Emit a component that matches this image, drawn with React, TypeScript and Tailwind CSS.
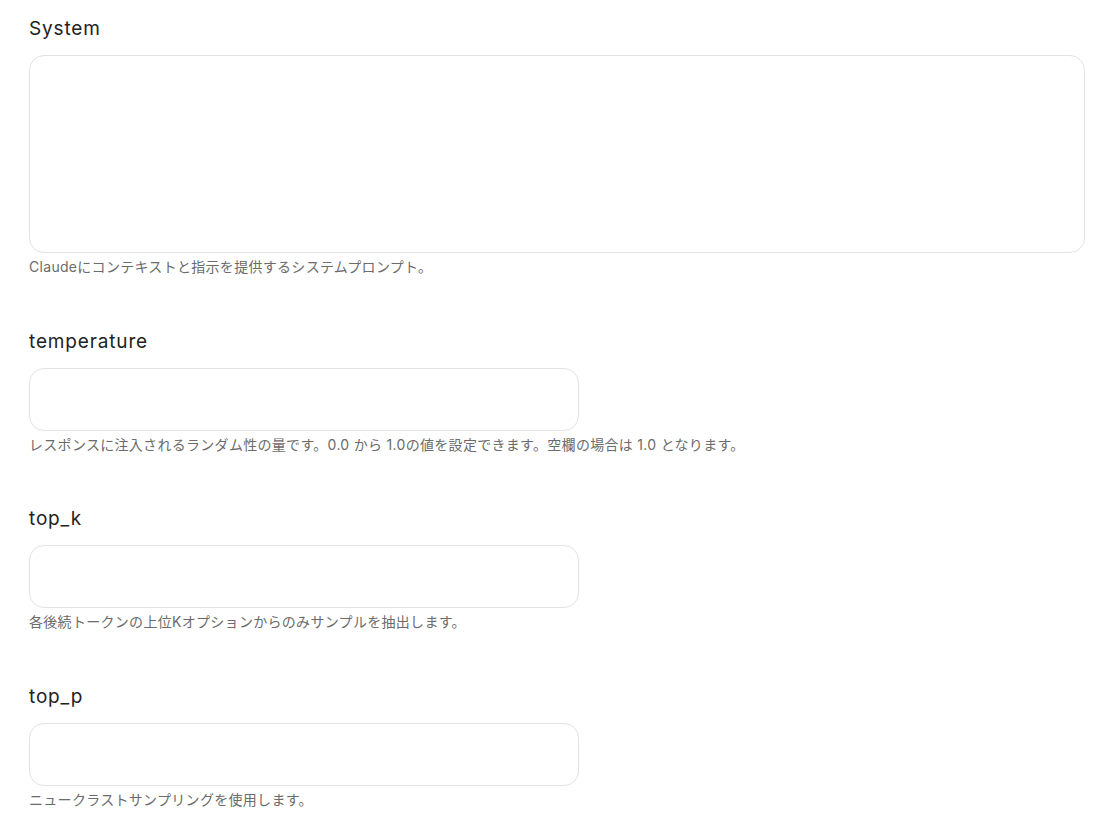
export default function App() {
  const campos = [
    {
      nombre: 'System',
      ayuda: 'Claudeにコンテキストと指示を提供するシステムプロンプト。',
      multilinea: true,
    },
    {
      nombre: 'temperature',
      ayuda: 'レスポンスに注入されるランダム性の量です。0.0 から 1.0の値を設定できます。空欄の場合は 1.0 となります。',
    },
    {
      nombre: 'top_k',
      ayuda: '各後続トークンの上位Kオプションからのみサンプルを抽出します。',
    },
    {
      nombre: 'top_p',
      ayuda: 'ニュークラストサンプリングを使用します。',
    },
  ]

  return (
    <div
      className="min-h-screen bg-white pl-[29px] pr-[19px] pt-[16px] flex flex-col gap-[48.5px]"
      style={{ fontFamily: 'Inter, "Noto Sans CJK JP", sans-serif' }}
    >
      {campos.map((c) => (
        <div key={c.nombre} className="flex flex-col">
          <label className="text-[19px] leading-[26px] tracking-[0.85px] text-[#222222] mb-[13px]">{c.nombre}</label>
          {c.multilinea ? (
            <textarea className="w-full h-[198px] rounded-[15px] border border-[#e2e2e6] bg-white resize-none outline-none" />
          ) : (
            <input className="w-[550px] h-[63px] rounded-[15px] border border-[#e2e2e6] bg-white outline-none" />
          )}
          <p className="text-[14px] leading-[27px] tracking-[0.3px] text-[#6b6b6b]">{c.ayuda}</p>
        </div>
      ))}
    </div>
  )
}
